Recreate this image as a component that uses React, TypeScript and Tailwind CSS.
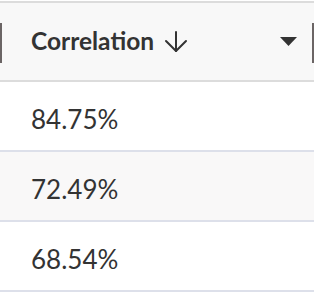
const rows = ["84.75%", "72.49%", "68.54%"];

function SortArrow() {
  return (
    <svg width="28" height="22" viewBox="0 0 28 22" fill="none" stroke="#333" strokeWidth="2" strokeLinecap="round" strokeLinejoin="round">
      <path d="M14 1v19" />
      <path d="M4 10l10 10 10-10" />
    </svg>
  );
}

function MenuCaret() {
  return (
    <svg width="17" height="9" viewBox="0 0 17 9">
      <path d="M0 0h17L8.5 9z" fill="#333" />
    </svg>
  );
}

export default function App() {
  return (
    <div className="w-[314px] h-[294px] overflow-hidden bg-white pt-px text-[#333]" style={{ fontFamily: "Lato, sans-serif" }}>
      <div className="relative flex h-[81px] items-center border-y-2 border-[#dcdcdc] bg-[#f8f8f8] pl-[31px] pr-[17px]">
        <span className="absolute left-0 top-[20px] h-[40px] w-[2px] bg-[#6b6565]" />
        <span className="text-[24.5px] font-bold">Correlation</span>
        <span className="ml-[8px] mt-[1px]">
          <SortArrow />
        </span>
        <span className="ml-auto">
          <MenuCaret />
        </span>
        <span className="absolute right-0 top-[20px] h-[40px] w-[2px] bg-[#6b6565]" />
      </div>
      {rows.map((v, i) => (
        <div
          key={v}
          className={`flex h-[70px] items-center border-b-2 border-[#dde0ea] pl-[31px] pt-[6px] ${i === 1 ? "bg-[#f9f8f8]" : "bg-white"}`}
        >
          <span className="text-[26px]">{v}</span>
        </div>
      ))}
    </div>
  );
}
